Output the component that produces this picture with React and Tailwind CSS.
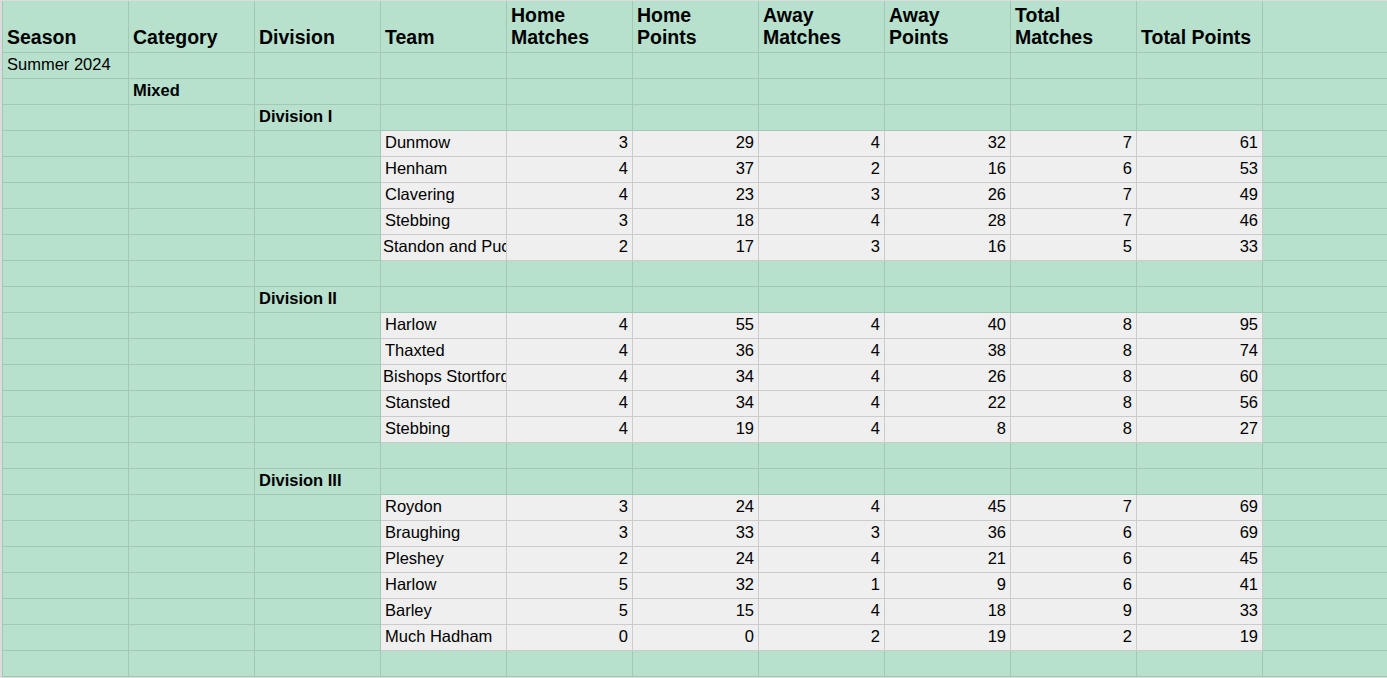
const headers = [
  ['Season'],
  ['Category'],
  ['Division'],
  ['Team'],
  ['Home', 'Matches'],
  ['Home', 'Points'],
  ['Away', 'Matches'],
  ['Away', 'Points'],
  ['Total', 'Matches'],
  ['Total Points'],
];

const divisions = [
  {
    name: 'Division I',
    teams: [
      ['Dunmow', 3, 29, 4, 32, 7, 61],
      ['Henham', 4, 37, 2, 16, 6, 53],
      ['Clavering', 4, 23, 3, 26, 7, 49],
      ['Stebbing', 3, 18, 4, 28, 7, 46],
      ['Standon and Puckeridge', 2, 17, 3, 16, 5, 33],
    ],
  },
  {
    name: 'Division II',
    teams: [
      ['Harlow', 4, 55, 4, 40, 8, 95],
      ['Thaxted', 4, 36, 4, 38, 8, 74],
      ['Bishops Stortford', 4, 34, 4, 26, 8, 60],
      ['Stansted', 4, 34, 4, 22, 8, 56],
      ['Stebbing', 4, 19, 4, 8, 8, 27],
    ],
  },
  {
    name: 'Division III',
    teams: [
      ['Roydon', 3, 24, 4, 45, 7, 69],
      ['Braughing', 3, 33, 3, 36, 6, 69],
      ['Pleshey', 2, 24, 4, 21, 6, 45],
      ['Harlow', 5, 32, 1, 9, 6, 41],
      ['Barley', 5, 15, 4, 18, 9, 33],
      ['Much Hadham', 0, 0, 2, 19, 2, 19],
    ],
  },
];

// long names get clipped by the next cell, like in the sheet
const clipped = ['Standon and Puckeridge', 'Bishops Stortford'];

function GreenCell({ children, bold, last }) {
  return (
    <div
      className={`${last ? 'flex-1' : 'w-[126px] shrink-0 border-r'} h-full border-[#a3c9b6] px-[4px] pb-[4px] flex items-center overflow-hidden whitespace-nowrap ${bold ? 'font-bold' : ''}`}
    >
      {children}
    </div>
  );
}

function GreenRow({ cells = {} }) {
  return (
    <div className="flex h-[26px] border-b border-[#a3c9b6]">
      {Array.from({ length: 11 }).map((_, i) => (
        <GreenCell key={i} bold={cells.bold && i === cells.col} last={i === 10}>
          {cells.col === i ? cells.text : null}
        </GreenCell>
      ))}
    </div>
  );
}

function TeamRow({ team }) {
  const [name, ...nums] = team;
  return (
    <div className="flex h-[26px]">
      {[0, 1, 2].map((i) => (
        <div key={i} className="w-[126px] shrink-0 h-full border-r border-b border-[#a3c9b6]" />
      ))}
      <div
        className={`w-[126px] shrink-0 h-full bg-[#efefef] border-r border-b border-[#cbcbcb] pb-[4px] flex items-center overflow-hidden whitespace-nowrap ${clipped.includes(name) ? 'pl-[2px]' : 'pl-[4px]'}`}
      >
        {name}
      </div>
      {nums.map((n, i) => (
        <div
          key={i}
          className="w-[126px] shrink-0 h-full bg-[#efefef] border-r border-b border-[#cbcbcb] pb-[4px] flex items-center justify-end pr-[4px]"
        >
          {n}
        </div>
      ))}
      <div className="flex-1 h-full border-b border-[#a3c9b6]" />
    </div>
  );
}

export default function App() {
  return (
    <div
      className="min-h-screen bg-[#dcdcdc] pl-[2px] pt-px text-black text-[16.5px] leading-5"
      style={{ fontFamily: '"Liberation Sans", Arial, sans-serif' }}
    >
      <div className="bg-[#b7e1cd] border-l border-[#a3c9b6]">
        <div className="flex h-[52px] border-b border-[#a3c9b6]">
          {headers.map((h, i) => (
            <div
              key={i}
              className="w-[126px] shrink-0 h-full border-r border-[#a3c9b6] px-[4px] pb-[4px] flex flex-col justify-end text-[19.5px] leading-[22px] font-bold whitespace-nowrap"
            >
              {h.map((line) => (
                <span key={line}>{line}</span>
              ))}
            </div>
          ))}
          <div className="flex-1" />
        </div>

        <GreenRow cells={{ col: 0, text: 'Summer 2024' }} />
        <GreenRow cells={{ col: 1, text: 'Mixed', bold: true }} />
        {divisions.map((d) => (
          <div key={d.name}>
            <GreenRow cells={{ col: 2, text: d.name, bold: true }} />
            {d.teams.map((t, ti) => (
              <TeamRow key={ti} team={t} />
            ))}
            <GreenRow />
          </div>
        ))}
      </div>
    </div>
  );
}
